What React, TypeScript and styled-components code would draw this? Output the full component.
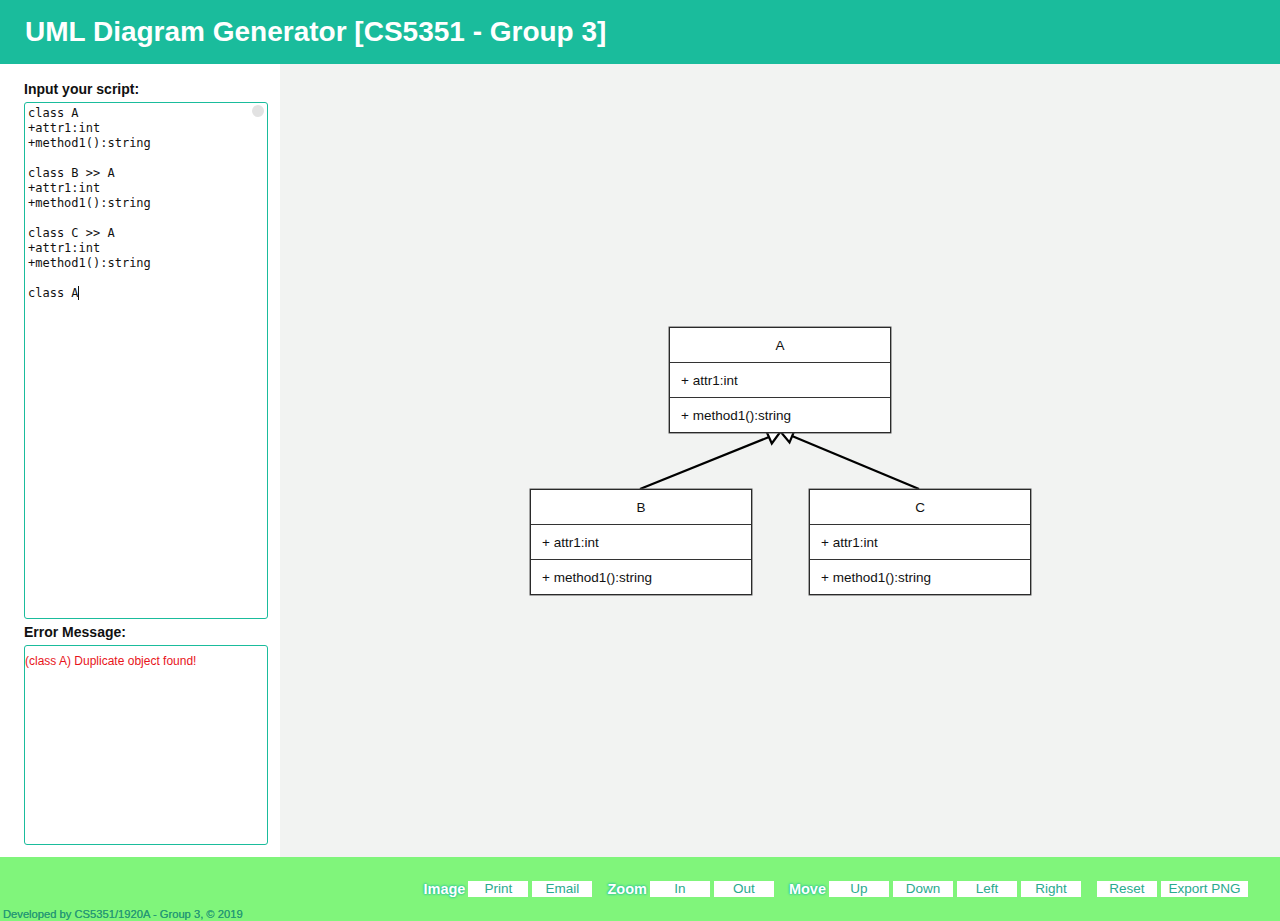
import React from 'react';
import styled, { createGlobalStyle } from 'styled-components';

const GlobalStyle = createGlobalStyle`
  html, body {
    margin: 0;
    padding: 0;
    font-family: "Liberation Sans", Arial, sans-serif;
  }
`;

const Page = styled.div`
  display: flex;
  flex-direction: column;
  width: 1280px;
  height: 921px;
  overflow: hidden;
`;

const Header = styled.header`
  display: flex;
  align-items: center;
  height: 64px;
  padding-left: 25px;
  background-color: #1abc9c;
  color: #fff;
  box-sizing: border-box;
`;

const Title = styled.h1`
  margin: 0;
  font-size: 28px;
  font-weight: bold;
  line-height: 1;
`;

const Main = styled.div`
  display: flex;
  height: 793px;
`;

const Sidebar = styled.aside`
  display: flex;
  flex-direction: column;
  width: 280px;
  padding: 16px 12px 12px 24px;
  box-sizing: border-box;
  background: #fff;
`;

const Label = styled.div<{ top?: number }>`
  font-size: 14px;
  font-weight: bold;
  line-height: 18px;
  margin-top: ${(p) => p.top || 0}px;
  margin-bottom: 4px;
  color: #111;
`;

const EditorWrap = styled.div`
  position: relative;
  width: 244px;
  height: 517px;
`;

const Editor = styled.textarea`
  width: 100%;
  height: 100%;
  box-sizing: border-box;
  border: 1px solid #1abc9c;
  border-radius: 3px;
  padding: 3px;
  margin: 0;
  resize: none;
  outline: none;
  font-family: "DejaVu Sans Mono", "Liberation Mono", monospace;
  font-size: 12px;
  line-height: 15px;
  color: #111;
  overflow: hidden;
`;

const ScrollDot = styled.span`
  position: absolute;
  top: 3px;
  right: 4px;
  width: 12px;
  height: 12px;
  border-radius: 50%;
  background: #e2e2e2;
`;

// text cursor sitting after the last "class A"
const Caret = styled.span`
  position: absolute;
  top: 184px;
  left: 54px;
  width: 1px;
  height: 14px;
  background: #111;
`;

const ErrorBox = styled.div`
  width: 244px;
  height: 200px;
  box-sizing: border-box;
  border: 1px solid #1abc9c;
  border-radius: 3px;
  padding: 8px 0 0 0;
  font-size: 12px;
  line-height: 14px;
  color: #e8141a;
`;

const Canvas = styled.section`
  position: relative;
  flex: 1;
  background: #f2f3f2;
`;

const ClassBox = styled.div`
  position: absolute;
  width: 222px;
  box-sizing: border-box;
  border: 1px solid #2a2a2a;
  box-shadow: 0 0 0 0.5px #555;
  background: #fff;
  font-size: 13.5px;
  color: #111;
`;

const ClassRow = styled.div<{ center?: boolean }>`
  height: 34px;
  display: flex;
  align-items: center;
  justify-content: ${(p) => (p.center ? 'center' : 'flex-start')};
  padding-left: ${(p) => (p.center ? 0 : 11)}px;
  & + & {
    border-top: 1px solid #333;
  }
`;

const Connectors = styled.svg`
  position: absolute;
  left: 0;
  top: 0;
  overflow: visible;
`;

const Footer = styled.footer`
  display: flex;
  flex-direction: column;
  height: 64px;
  background: #80f57b;
  box-sizing: border-box;
  padding-top: 24px;
`;

const Toolbar = styled.div`
  display: flex;
  align-items: center;
  justify-content: flex-end;
  height: 16px;
  padding-right: 32px;
`;

const Group = styled.div<{ gap?: number }>`
  display: flex;
  align-items: center;
  gap: 4px;
  margin-left: ${(p) => p.gap ?? 15}px;
`;

const GroupLabel = styled.span`
  font-size: 14.5px;
  font-weight: bold;
  color: #fff;
  text-shadow: 0 0 3px #1abc9c, 0 0 2px #1abc9c;
  margin-right: -1px;
`;

const ToolButton = styled.button<{ wide?: boolean }>`
  width: ${(p) => (p.wide ? 87 : 60)}px;
  height: 16px;
  padding: 0;
  border: none;
  background: #fff;
  color: #2aaa8e;
  font-family: "Liberation Sans", Arial, sans-serif;
  font-size: 13.5px;
  line-height: 16px;
  cursor: pointer;
`;

const Credit = styled.div`
  margin-top: 10px;
  padding-left: 3px;
  font-size: 11.2px;
  line-height: 14px;
  color: #279a74;
  text-shadow: 0 0 0.4px #279a74;
`;

const script = `class A
+attr1:int
+method1():string

class B >> A
+attr1:int
+method1():string

class C >> A
+attr1:int
+method1():string

class A`;

interface UmlClass {
  name: string;
  x: number;
  y: number;
  attrs: string[];
  methods: string[];
}

const classes: UmlClass[] = [
  { name: 'A', x: 389, y: 263, attrs: ['+ attr1:int'], methods: ['+ method1():string'] },
  { name: 'B', x: 250, y: 425, attrs: ['+ attr1:int'], methods: ['+ method1():string'] },
  { name: 'C', x: 529, y: 425, attrs: ['+ attr1:int'], methods: ['+ method1():string'] },
];

const toolGroups = [
  { label: 'Image', buttons: ['Print', 'Email'] },
  { label: 'Zoom', buttons: ['In', 'Out'] },
  { label: 'Move', buttons: ['Up', 'Down', 'Left', 'Right'] },
];

export default function App() {
  return (
    <>
      <GlobalStyle />
      <Page>
        <Header>
          <Title>UML Diagram Generator [CS5351 - Group 3]</Title>
        </Header>
        <Main>
          <Sidebar>
            <Label>Input your script:</Label>
            <EditorWrap>
              <Editor defaultValue={script} spellCheck={false} />
              <ScrollDot />
              <Caret />
            </EditorWrap>
            <Label top={4}>Error Message:</Label>
            <ErrorBox>(class A) Duplicate object found!</ErrorBox>
          </Sidebar>
          <Canvas>
            <Connectors width="1000" height="793">
              <line x1="360" y1="425" x2="489" y2="373" stroke="#000" strokeWidth="2.2" />
              <line x1="639" y1="425" x2="512" y2="372" stroke="#000" strokeWidth="2.2" />
              <polygon points="501,367 486.5,367.5 491.8,379.5" fill="#fff" stroke="#000" strokeWidth="2.2" />
              <polygon points="500,367 514.5,366.5 509.5,378.5" fill="#fff" stroke="#000" strokeWidth="2.2" />
            </Connectors>
            {classes.map((c) => (
              <ClassBox key={c.name} style={{ left: c.x, top: c.y }}>
                <ClassRow center>{c.name}</ClassRow>
                {c.attrs.map((a) => (
                  <ClassRow key={a}>{a}</ClassRow>
                ))}
                {c.methods.map((m) => (
                  <ClassRow key={m}>{m}</ClassRow>
                ))}
              </ClassBox>
            ))}
          </Canvas>
        </Main>
        <Footer>
          <Toolbar>
            {toolGroups.map((g, i) => (
              <Group key={g.label} gap={i === 0 ? 0 : 15}>
                <GroupLabel>{g.label}</GroupLabel>
                {g.buttons.map((b) => (
                  <ToolButton key={b}>{b}</ToolButton>
                ))}
              </Group>
            ))}
            <Group gap={16}>
              <ToolButton>Reset</ToolButton>
              <ToolButton wide>Export PNG</ToolButton>
            </Group>
          </Toolbar>
          <Credit>Developed by CS5351/1920A - Group 3, © 2019</Credit>
        </Footer>
      </Page>
    </>
  );
}
